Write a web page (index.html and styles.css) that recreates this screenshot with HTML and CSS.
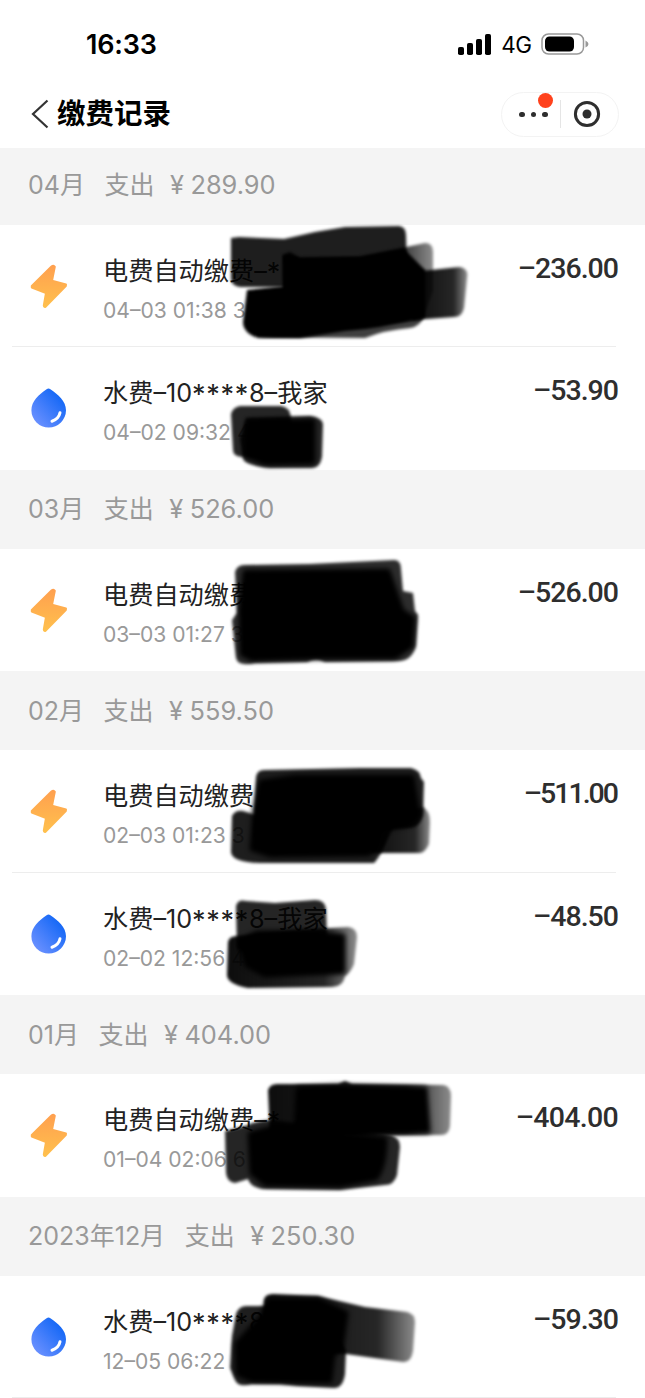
FILE: index.html
```html
<!DOCTYPE html>
<html lang="zh-CN">
<head>
    <meta charset="UTF-8">
    <meta name="viewport" content="width=device-width, initial-scale=1.0">
    <title>缴费记录</title>
    <link rel="stylesheet" href="styles.css">
</head>
<body>
    <!-- shared icons and filters -->
    <svg class="defs" width="0" height="0">
        <defs>
            <linearGradient id="boltFill" x1="0" y1="0" x2="0" y2="1">
                <stop offset="0" stop-color="#ffa04f"/>
                <stop offset="1" stop-color="#ffc04d"/>
            </linearGradient>
            <linearGradient id="dropFill" x1="0.1" y1="0.9" x2="0.8" y2="0.2">
                <stop offset="0" stop-color="#6c91ff"/>
                <stop offset="1" stop-color="#1769f6"/>
            </linearGradient>
            <linearGradient id="fade" x1="0" y1="0" x2="1" y2="0">
                <stop offset="0" stop-color="#000" stop-opacity="0.95"/>
                <stop offset="0.75" stop-color="#000" stop-opacity="0.85"/>
                <stop offset="1" stop-color="#000" stop-opacity="0.45"/>
            </linearGradient>
            <symbol id="bolt" viewBox="0 0 48 48">
                <path d="M26.5 4.5 Q28.5 2.8 29.8 4.7 L27 18.8 L41 22.5 L40.8 24 L20.5 44.8 Q19 45.5 18.8 43.5 L21 31 L6.8 25.6 L6.8 24 Z" fill="url(#boltFill)" stroke="url(#boltFill)" stroke-width="2" stroke-linejoin="round"/>
            </symbol>
            <symbol id="drop" viewBox="0 0 48 48">
                <path d="M21.6 5.2 Q23.5 3.8 25.4 5.2 C33 10.5 41 17 41 26.2 A17.3 17.3 0 0 1 6.4 26.2 C6.4 17 14 10.5 21.6 5.2 Z" fill="url(#dropFill)"/>
                <path d="M35 28.8 Q33.8 35 27 37.2" fill="none" stroke="#fff" stroke-width="3" stroke-linecap="round"/>
            </symbol>
        </defs>
    </svg>

    <div class="status-bar">
        <div class="clock">16:33</div>
        <div class="status-right">
            <svg class="signal" width="34" height="21" viewBox="0 0 34 21">
                <rect x="0" y="13" width="6" height="8" rx="1.8"/>
                <rect x="9" y="9" width="6" height="12" rx="1.8"/>
                <rect x="18" y="5" width="6" height="16" rx="1.8"/>
                <rect x="27" y="0" width="6" height="21" rx="1.8"/>
            </svg>
            <span class="network">4G</span>
            <svg class="battery" width="48" height="22" viewBox="0 0 48 22">
                <rect x="1" y="1" width="41.5" height="20" rx="6.5" fill="#fff" stroke="#999" stroke-width="1.5"/>
                <rect x="4" y="3.5" width="29" height="15" rx="4.5"/>
                <path d="M44.5 7.5 Q47.5 9 47.5 11 Q47.5 13 44.5 14.5 Z" fill="#999"/>
            </svg>
        </div>
    </div>

    <div class="nav-bar">
        <svg class="back" width="18" height="30" viewBox="0 0 18 30"><path d="M16.5 1.5 L2 15 L16.5 28.5" fill="none" stroke="#333" stroke-width="2.2"/></svg>
        <h1>缴费记录</h1>
        <div class="capsule">
            <div class="more">
                <i></i><i></i><i></i>
                <span class="badge"></span>
            </div>
            <div class="divider"></div>
            <svg class="close" width="28" height="28" viewBox="0 0 28 28">
                <circle cx="14" cy="14" r="11.6" fill="none" stroke="#2e2e2e" stroke-width="3"/>
                <circle cx="14" cy="14" r="4.5" fill="#2e2e2e"/>
            </svg>
        </div>
    </div>

    <div class="month first"><span>04月</span><span>支出</span><span class="total"><b>¥</b>289.90</span></div>
    <div class="record">
        <svg class="icon"><use href="#bolt"/></svg>
        <div class="info">
            <div class="title">电费自动缴费–<em>*</em></div>
            <div class="meta">04–03 01:38 32</div>
        </div>
        <div class="amount">–236.00</div>
        <svg class="scribble">
            <path d="M231 13 L239 12 L284 14 L315 7 L345 2 L399 1 Q406 2 406 10 L407 45 L290 62 L240 62 Q231 61 231 53 Z" opacity="0.88"/>
            <path d="M283 30 L290 27 L300 33 L360 32 L425 18 Q433 18 433 27 L433 66 L422 95 L285 105 Z" fill="url(#fade)"/>
            <path d="M283 30 L300 33 L360 32 L404 24 L425 45 L425 92 Q380 104 345 106 L300 113 L258 113 Q243 108 243 97 L247 65 L283 61 Z"/>
            <path d="M412 47 L459 42 Q469 43 467 53 L464 83 Q462 92 454 92 L412 95 Z" fill="url(#fade)"/>
            <path d="M258 112 L365 113 Q385 105 410 103 Q421 101 423 92 L340 98 Z" opacity="0.75"/>
        </svg>
    </div>
    <div class="record">
        <svg class="icon"><use href="#drop"/></svg>
        <div class="info">
            <div class="title">水费–10<em>****</em>8–我家</div>
            <div class="meta">04–02 09:32 4</div>
        </div>
        <div class="amount">–53.90</div>
        <svg class="scribble">
            <path d="M231 67 Q233 60 240 59 L281 59 Q290 60 291 71 L290 105 L243 110 Q233 110 233 103 Z" opacity="0.85"/>
            <path d="M246 71 L310 69 Q323 71 323 77 L322 110 Q320 121 312 121 L270 121 Q242 118 243 110 L240 92 Z" opacity="0.85"/>
            <path class="core" d="M249 75 L313 74 L313 115 L265 116 L247 109 Z"/>
        </svg>
    </div>

    <div class="month"><span>03月</span><span>支出</span><span class="total"><b>¥</b>526.00</span></div>
    <div class="record">
        <svg class="icon"><use href="#bolt"/></svg>
        <div class="info">
            <div class="title">电费自动缴费</div>
            <div class="meta">03–03 01:27 3</div>
        </div>
        <div class="amount">–526.00</div>
        <svg class="scribble">
            <path d="M235 23 Q237 16 244 16 L310 15 L394 11 Q401 11 401 20 L403 42 L413 44 L415 62 L418 66 L416 97 Q412 111 400 112 L325 113 Q316 108 307 113 L255 114 Q238 118 236 109 L232 71 L237 64 Z" opacity="0.82"/>
            <path class="core" d="M245 23 L388 22 L396 45 L402 62 L413 69 L411 97 L395 108 L320 108 L252 110 L242 105 L241 60 Z"/>
        </svg>
    </div>

    <div class="month"><span>02月</span><span>支出</span><span class="total"><b>¥</b>559.50</span></div>
    <div class="record">
        <svg class="icon"><use href="#bolt"/></svg>
        <div class="info">
            <div class="title">电费自动缴费</div>
            <div class="meta">02–03 01:23 3</div>
        </div>
        <div class="amount amount-11">–511.00</div>
        <svg class="scribble">
            <path d="M256 27 Q257 20 264 20 L360 18 L411 18 Q420 20 421 28 L424 32 L423 65 Q420 78 408 78 L254 88 Z" opacity="0.88"/>
            <path d="M232 66 Q235 60 243 61 L257 65 L395 72 Q382 105 374 113 L260 113 Q230 112 231 101 Z" opacity="0.88"/>
            <path d="M375 72 L423 57 Q430 61 430 72 L429 94 Q425 103 419 103 L370 103 Z" fill="url(#fade)"/>
            <path class="core" d="M261 32 L295 27 L412 27 L418 64 L408 74 L380 79 L376 97 L368 104 L270 105 L252 99 L255 60 Z"/>
        </svg>
    </div>
    <div class="record">
        <svg class="icon"><use href="#drop"/></svg>
        <div class="info">
            <div class="title">水费–10<em>****</em>8–我家</div>
            <div class="meta">02–02 12:56 4</div>
        </div>
        <div class="amount">–48.50</div>
        <svg class="scribble">
            <path d="M236 33 Q238 26 246 28 L275 30 L315 27 Q325 27 326 36 L327 64 L250 80 L237 76 Z" opacity="0.85"/>
            <path d="M228 69 Q229 63 237 63 L300 57 L348 54 Q357 55 357 64 L354 91 Q351 99 345 103 Q343 114 332 114 L248 115 Q227 111 227 102 Z" fill="url(#fade)"/>
            <path class="core" d="M257 60 L310 60 L343 63 L343 99 L265 102 L247 92 L240 69 Z"/>
        </svg>
    </div>

    <div class="month"><span>01月</span><span>支出</span><span class="total"><b>¥</b>404.00</span></div>
    <div class="record">
        <svg class="icon"><use href="#bolt"/></svg>
        <div class="info">
            <div class="title">电费自动缴费–<em>*</em></div>
            <div class="meta">01–04 02:06 6</div>
        </div>
        <div class="amount amount-404">–404.00</div>
        <svg class="scribble">
            <path d="M268 16 Q270 10 277 10 L338 10 L345 7 L352 10 L443 11 Q451 12 451 22 L450 52 Q449 61 441 61 L270 61 Z" fill="url(#fade)"/>
            <path class="core" d="M298 15 L335 13 L425 15 L428 57 L296 60 Z"/>
            <path d="M225 57 L245 52 Q255 47 270 46 L391 61 Q400 64 400 73 L397 101 Q394 111 385 111 L340 116 L262 115 Q250 113 248 105 L235 109 Q227 108 226 99 Z" opacity="0.85"/>
            <path class="core" d="M250 60 L275 53 L385 65 Q385 92 376 104 L340 111 L266 110 L252 99 Z"/>
        </svg>
    </div>

    <div class="month"><span>2023年12月</span><span>支出</span><span class="total"><b>¥</b>250.30</span></div>
    <div class="record last">
        <svg class="icon"><use href="#drop"/></svg>
        <div class="info">
            <div class="title">水费–10<em>****</em>8</div>
            <div class="meta">12–05 06:22</div>
        </div>
        <div class="amount">–59.30</div>
        <svg class="scribble">
            <path d="M264 24 Q265 18 273 18 L318 20 L365 31 L407 36 Q415 38 415 46 L413 75 Q411 87 403 86 L346 78 L264 70 Z" fill="url(#fade)"/>
            <path d="M236 38 Q239 29 248 30 L320 30 L346 75 L345 98 Q343 112 334 112 L298 110 L280 108 L252 108 Q238 112 235 104 L230 92 L232 60 Z" opacity="0.88"/>
            <path class="core" d="M269 25 L318 24 L346 37 L341 73 L333 79 L330 105 L298 105 L252 104 L238 98 L237 68 L262 40 Z"/>
        </svg>
    </div>
</body>
</html>
```
FILE: styles.css
```css
* { box-sizing: border-box; }
body { margin: 0; background: #fff; color: #2e2e2e; font-family: Inter, "Noto Sans CJK SC", sans-serif; height: 1398px; overflow: hidden; }
.defs { display: block; }

.status-bar { display: flex; justify-content: space-between; align-items: center; height: 88px; padding: 0 56px 0 86px; color: #000; }
.clock { font-size: 27px; font-weight: 600; letter-spacing: -0.2px; }
.status-right { display: flex; align-items: center; }
.network { font-size: 22.5px; margin: 1px 9.5px 0 9px; letter-spacing: -0.5px; }

.nav-bar { display: flex; align-items: center; height: 59.5px; padding: 0 26px 7px 31px; }
h1 { margin: 0 auto 0 8px; font-size: 28.5px; line-height: 40px; font-weight: 700; color: #000; }
.capsule { display: flex; align-items: center; width: 118px; height: 45px; border: 1px solid #f3f3f3; border-radius: 23px; }
.more { position: relative; display: flex; gap: 6px; padding-left: 17px; width: 58px; }
.more i { width: 5.5px; height: 5.5px; border-radius: 50%; background: #2e2e2e; }
.badge { position: absolute; left: 35.5px; top: -19px; width: 15px; height: 15px; border-radius: 50%; background: #ff411c; }
.divider { width: 1px; height: 28px; background: #e5e5e5; }
.close { margin-left: 12px; }

.month { display: flex; align-items: flex-end; height: 79px; padding: 0 28px 20.5px; background: #f4f4f4; color: #999; font-size: 25px; line-height: 38px; font-weight: 370; }
.month.first { height: 77px; }
.month span { margin-right: 19.5px; }
.month .total { margin: 0 0 0 -4px; font-size: 25.4px; }
.month b { font-weight: 370; margin-right: 6.5px; }

.record { position: relative; display: flex; height: 122.5px; padding: 0 27px 0 25px; }
.record + .record::before, .last::before { content: ""; position: absolute; left: 12px; right: 29px; top: -1px; height: 1px; background: #ededed; }
.last::before { top: auto; bottom: 0; }
.icon { width: 48px; height: 48px; margin-top: 37px; flex: none; }
.info { flex: 1; margin-left: 30px; padding-top: 27px; white-space: nowrap; }
.title { font-size: 25.2px; line-height: 38px; font-weight: 370; color: #222; }
.title em { font-style: normal; font-size: 27px; line-height: 1; letter-spacing: 0.7px; vertical-align: -2px; }
.meta { margin-top: 5px; font-size: 21.1px; line-height: 32px; font-weight: 370; color: #999; }
.amount { margin-top: 26px; font-family: Roboto, sans-serif; font-size: 28.5px; line-height: 36px; font-weight: 500; letter-spacing: -1px; }
.amount-11 { letter-spacing: -2px; padding-right: 1px; }
.amount-404 { letter-spacing: -0.7px; }

/* marker strokes over the private details */
.scribble { position: absolute; left: 0; top: 0; width: 100%; height: 100%; overflow: visible; }
.scribble path { filter: blur(1.4px); }
.scribble .core { stroke: #000; stroke-width: 5px; stroke-linejoin: round; filter: blur(2.5px); }
```
